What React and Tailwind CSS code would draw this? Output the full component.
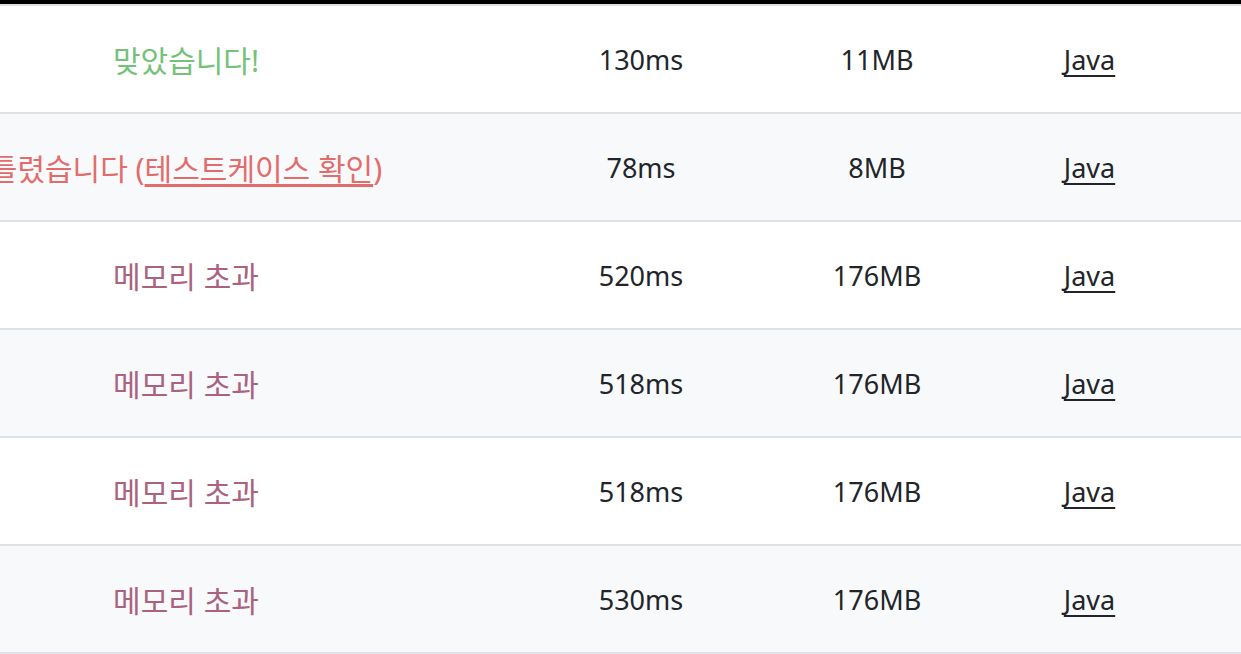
import React from 'react';

const rows = [
  { result: '맞았습니다!', kind: 'ac', time: '130ms', memory: '11MB' },
  { result: '틀렸습니다', kind: 'wa', time: '78ms', memory: '8MB' },
  { result: '메모리 초과', kind: 'mle', time: '520ms', memory: '176MB' },
  { result: '메모리 초과', kind: 'mle', time: '518ms', memory: '176MB' },
  { result: '메모리 초과', kind: 'mle', time: '518ms', memory: '176MB' },
  { result: '메모리 초과', kind: 'mle', time: '530ms', memory: '176MB' },
];

const Result = ({ row }) => {
  if (row.kind === 'ac') return <span className="text-[#72c278]">{row.result}</span>;
  if (row.kind === 'wa')
    return (
      <span className="text-[#e26c6c]">
        {row.result} (<a href="#" className="underline underline-offset-[4px]">테스트케이스 확인</a>)
      </span>
    );
  return <span className="text-[#aa627e]">{row.result}</span>;
};

export default function App() {
  return (
    <div
      className="h-[654px] w-full overflow-hidden bg-white text-[27px] text-[#212529]"
      style={{ fontFamily: '"Noto Sans", "Noto Sans CJK KR", sans-serif' }}
    >
      <div className="h-[4px] bg-black" />
      <div className="border-t-2 border-[#dee2e6]">
        {rows.map((row, i) => (
          <div
            key={i}
            className={`grid h-[108px] grid-cols-[372px_148px_242px_230px_195px_1fr] items-center border-b-2 border-[#dee2e6] pt-[2px] ${
              i % 2 === 1 ? 'bg-[#f8f9fb]' : 'bg-white'
            }`}
          >
            <div className="flex justify-center whitespace-nowrap text-[30px]">
              <Result row={row} />
            </div>
            <div />
            <div className="text-center">{row.time}</div>
            <div className="text-center">{row.memory}</div>
            <div className="text-center">
              <a href="#" className="underline underline-offset-[5px]">Java</a>
            </div>
            <div />
          </div>
        ))}
      </div>
    </div>
  );
}
